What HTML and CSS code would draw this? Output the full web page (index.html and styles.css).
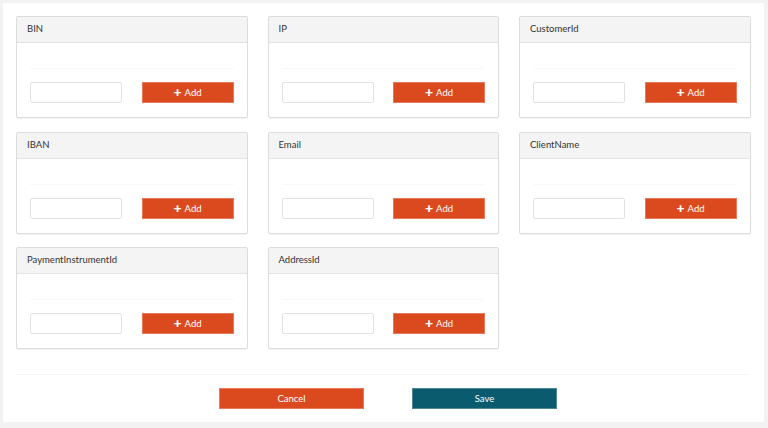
FILE: index.html
```html
<!DOCTYPE html>
<html>
<head>
<meta charset="utf-8">
<link rel="stylesheet" href="styles.css">
</head>
<body>
<div class="panel">
  <div class="grid">
    <div class="card"><div class="card-head">BIN</div><div class="card-body"><div class="sep"></div><div class="row"><input class="field" type="text"><button class="add"><span class="plus">+</span> Add</button></div></div></div>
    <div class="card"><div class="card-head">IP</div><div class="card-body"><div class="sep"></div><div class="row"><input class="field" type="text"><button class="add"><span class="plus">+</span> Add</button></div></div></div>
    <div class="card"><div class="card-head">CustomerId</div><div class="card-body"><div class="sep"></div><div class="row"><input class="field" type="text"><button class="add"><span class="plus">+</span> Add</button></div></div></div>
    <div class="card"><div class="card-head">IBAN</div><div class="card-body"><div class="sep"></div><div class="row"><input class="field" type="text"><button class="add"><span class="plus">+</span> Add</button></div></div></div>
    <div class="card"><div class="card-head">Email</div><div class="card-body"><div class="sep"></div><div class="row"><input class="field" type="text"><button class="add"><span class="plus">+</span> Add</button></div></div></div>
    <div class="card"><div class="card-head">ClientName</div><div class="card-body"><div class="sep"></div><div class="row"><input class="field" type="text"><button class="add"><span class="plus">+</span> Add</button></div></div></div>
    <div class="card"><div class="card-head">PaymentInstrumentId</div><div class="card-body"><div class="sep"></div><div class="row"><input class="field" type="text"><button class="add"><span class="plus">+</span> Add</button></div></div></div>
    <div class="card"><div class="card-head">AddressId</div><div class="card-body"><div class="sep"></div><div class="row"><input class="field" type="text"><button class="add"><span class="plus">+</span> Add</button></div></div></div>
  </div>
  <div class="footer">
    <button class="btn cancel">Cancel</button>
    <button class="btn save">Save</button>
  </div>
</div>
</body>
</html>
```
FILE: styles.css
```css
* { box-sizing: border-box; }
html, body { margin: 0; padding: 0; }
body {
  background: #f2f2f2;
  font-family: Lato, "Open Sans", sans-serif;
  width: 768px;
  height: 428px;
  padding: 3px 4px 6px 3px;
}
.panel {
  background: #fff;
  height: 419px;
  padding: 13px 14px 0 13px;
}
.grid {
  display: grid;
  grid-template-columns: repeat(3, 231.5px);
  column-gap: 20px;
  row-gap: 13.5px;
}
.card {
  height: 102px;
  border: 1px solid #dcdcdc;
  border-radius: 2px;
  box-shadow: 0 1px 1px rgba(0,0,0,0.05);
  background: #fff;
  display: flex;
  flex-direction: column;
}
.card-head {
  height: 26px;
  background: #f4f4f4;
  border-bottom: 1px solid #e2e2e2;
  font-size: 9.5px;
  color: #333;
  padding: 0 10px;
  line-height: 23px;
}
.card-body {
  padding: 25px 13px 0 13px;
}
.sep {
  height: 1px;
  background: #f8f8f8;
}
.row {
  display: flex;
  justify-content: space-between;
  margin-top: 13px;
}
.field {
  width: 92px;
  height: 21px;
  border: 1px solid #e2e2e2;
  border-radius: 2px;
  background: #fff;
  margin: 0;
  padding: 0;
}
.add {
  width: 92px;
  height: 21px;
  background: #db4a1e;
  border: 1px solid #e8785a;
  color: #fff;
  font-family: Lato, sans-serif;
  font-size: 9.5px;
  font-weight: 400;
  padding: 0;
  margin: 0;
  display: flex;
  align-items: center;
  justify-content: center;
  gap: 3px;
}
.plus {
  font-size: 14px;
  font-weight: 900;
  line-height: 1;
  margin-top: -1px;
}
.footer {
  margin-top: 25px;
  border-top: 1px solid #f5f5f5;
  display: flex;
  justify-content: center;
  gap: 48px;
  padding-top: 13px;
  padding-left: 10px;
}
.btn {
  width: 145px;
  height: 21px;
  color: #fff;
  font-family: Lato, sans-serif;
  font-size: 9.5px;
  font-weight: 400;
  padding: 0;
  margin: 0;
}
.cancel {
  background: #db4a1e;
  border: 1px solid #e8785a;
}
.save {
  background: #0b5b6e;
  border: 1px solid #4f8795;
}
```
